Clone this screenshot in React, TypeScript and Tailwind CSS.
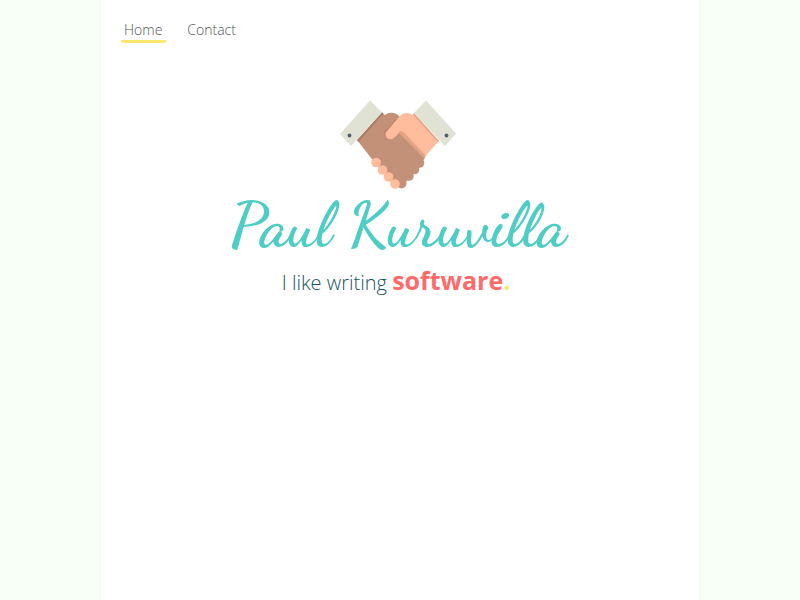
import React from "react";

function Handshake() {
  return (
    <svg className="block h-[90px] w-[116px]" viewBox="0 0 116 90" role="img" aria-label="Handshake">
      <path d="M17 40 42 13 45 15C49 12 55 12 59 16L85 58 62 87H55L35 63Z" fill="#c39178" />
      <g fill="#c39178">
        <circle cx="79.5" cy="63" r="4.8" />
        <circle cx="74.5" cy="69.5" r="4.8" />
        <circle cx="69" cy="76" r="4.8" />
        <circle cx="61.5" cy="83.5" r="5" />
        <path d="M55 50 80 60 62 80Z" />
      </g>
      <path d="M42 12 43.500 13.500 18.500 42 17 40.500Z" fill="#aa7c67" />
      <path d="M56 20 45 31C43 34 45 39 50 39.500L60 31Z" fill="#b5836c" />
      <path d="M74 14 99 41 84 57.500 60 32 54.500 37.500C52 40 48 39.500 46.500 37.500C45 35.500 45 33 47 31L59 17C63 12 68 12 73 15Z" fill="#ffbd9d" />
      <path d="M60 31 63.500 32 86 56 84 58 59 33Z" fill="#e3a384" />
      <path d="M74 13 99 41 98 42 73 14.500Z" fill="#e3a384" />
      <g fill="#ffbd9d">
        <circle cx="36" cy="62.500" r="4.800" />
        <circle cx="42.500" cy="70" r="4.800" />
        <circle cx="48.500" cy="77" r="4.800" />
        <circle cx="55" cy="84" r="4.800" />
      </g>
      <path d="M30 0.500 42 12.500 11 46 0 34Z" fill="#e0e2d3" />
      <path d="M86 0.500 74 13 105 46 116 33.500Z" fill="#e0e2d3" />
      <circle cx="9.500" cy="35.500" r="1.900" fill="#556070" />
      <circle cx="106.500" cy="35.500" r="1.900" fill="#556070" />
    </svg>
  );
}

export default function App() {
  return (
    <div className="min-h-screen bg-[#f7fff7] font-['Open_Sans',sans-serif] font-light">
      <div className="mx-auto min-h-screen w-3/4 border-x border-[#f0faf5] bg-white">
        <nav className="flex gap-4 px-5 pt-5 text-sm text-[#555]">
          <a href="#home" aria-current="page" className="rounded-xs border-b-3 border-[#ffe66d] px-[3px] pr-1 leading-5">Home</a>
          <a href="#contact" className="border-b-3 border-transparent px-[5px] leading-5">Contact</a>
        </nav>
        <main className="flex flex-col items-center pt-[57px]">
          <div className="pr-1">
            <Handshake />
          </div>
          <h1 className="pr-1 whitespace-nowrap font-['Satisfy','Dancing_Script',cursive] text-[63px] leading-[70px] font-bold text-[#4ecdc4]">
            Paul Kuruvilla
          </h1>
          <p className="pr-2 text-xl leading-10 text-[#1a535c]">
            I like writing{" "}
            <strong className="text-[25px] font-bold text-[#ff6b6b]">
              software<span className="text-[#ffe66d]">.</span>
            </strong>
          </p>
        </main>
      </div>
    </div>
  );
}
